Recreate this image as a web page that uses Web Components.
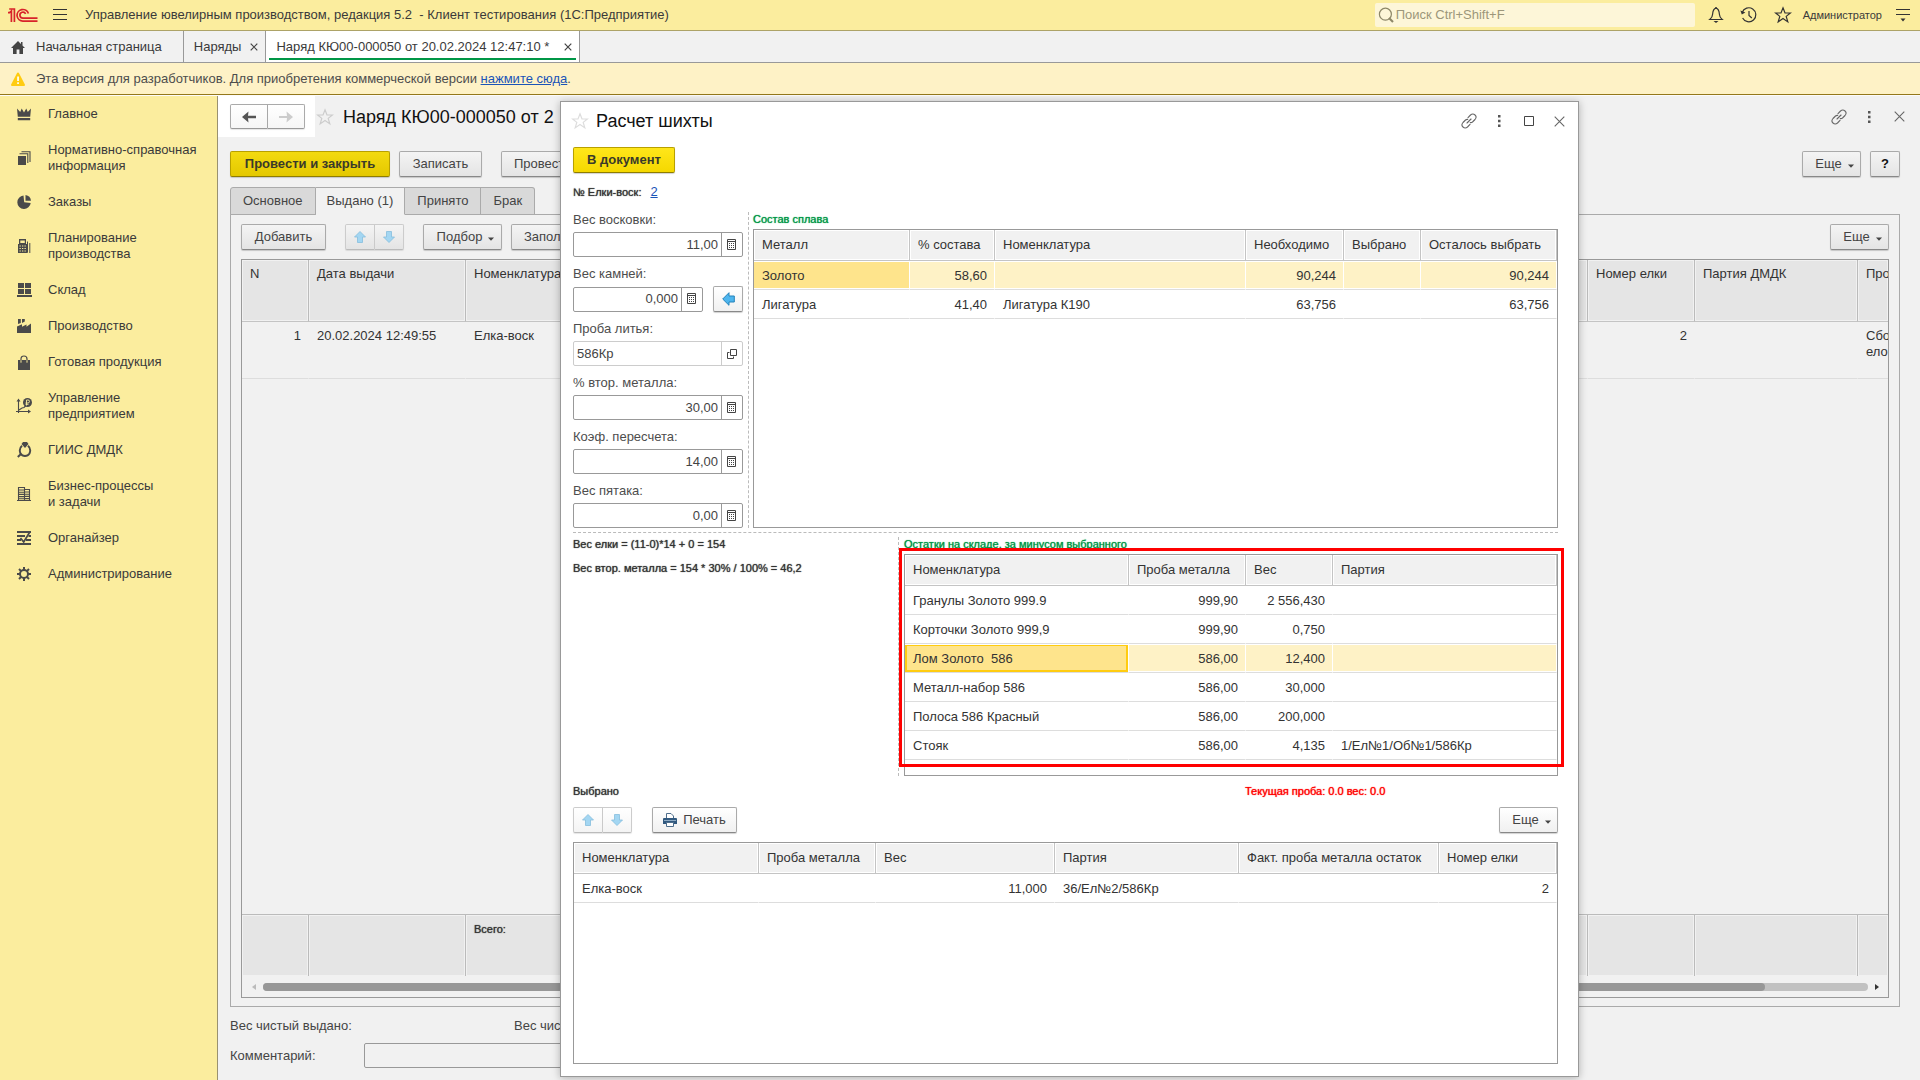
<!DOCTYPE html>
<html lang="ru">
<head>
<meta charset="utf-8">
<title>Управление ювелирным производством</title>
<style>
html, body { margin: 0; height: 100%; }
body { font: 13px/16px "Liberation Sans", Arial, sans-serif; color: #3a3a3a; background: #f1f1f1; overflow: hidden; }
</style>
</head>
<body>
<erp-app></erp-app>
<script>
const ICONS = {
  logo: ['0 0 30 14', '<g fill="none" stroke="#d8232a" stroke-width="1.7"><path d="M0 4.6H1.6L3.4 3V14M1.2 1H6.4V14"/><path d="M20.4 5.6A5.8 5.8 0 1 0 15 13.1H29.5"/><path d="M17.6 5.8A3 3 0 1 0 15 10.1H29.5"/></g>'],
  burger: ['0 0 14 12', '<path d="M0 .5h14M0 5.5h14M0 10.5h14" stroke="#333"/>'],
  search: ['0 0 16 16', '<circle cx="7.4" cy="7.2" r="6" fill="none" stroke="#8d8768" stroke-width="1.2"/><path d="M11 11l4 4" stroke="#8d8768" stroke-width="2.2"/>'],
  bell: ['0 0 16 18', '<path d="M8 2.2C5 3 4.8 5.5 4.6 8.2 4.5 10.8 3.6 12 1.8 13.5H14.2C12.4 12 11.5 10.8 11.4 8.2 11.2 5.5 11 3 8 2.2Z" fill="none" stroke="#333" stroke-width="1.2"/><path d="M7.3 1h1.400v1.500H7.300zM5.500 15h5L8 17z" fill="#333"/>'],
  history: ['0 0 18 18', '<path d="M2.200 6.500A7 7 0 1 1 2.600 12" fill="none" stroke="#333" stroke-width="1.200"/><path d="M.4 4.500l1.400 4 3.600-2z" fill="#333"/><path d="M9 5v4.500l2.800 2.500" fill="none" stroke="#333" stroke-width="1.200"/>'],
  star: ['0 0 18 18', '<path d="M9 1.800l2 5.200h5.400l-4.200 3.400 1.600 5.500L9 12.600l-4.800 3.300 1.600-5.500L1.600 7H7z" fill="none" stroke="currentColor" stroke-width="1.200"/>'],
  usermenu: ['0 0 14 14', '<path d="M0 1.500h14M0 6.500h14" stroke="#333"/><path d="M4.500 10.500h5L7 13.500z" fill="#333"/>'],
  home: ['0 0 14 14', '<path d="M7 1L0 8h2v6h3.600V9.500h2.800V14H12V8h2L11.500 5.500V2H10v2z" fill="#444"/>'],
  close: ['0 0 11 11', '<path d="M.7.7l9.600 9.600M10.300.7L.7 10.300" stroke="currentColor" stroke-width="1.100"/>'],
  closeTab: ['0 0 8 8', '<path d="M.7.7l6.600 6.600M7.300.7L.7 7.300" stroke="#444" stroke-width="1.200"/>'],
  warn: ['0 0 14 14', '<path d="M7 .5Q7.800.5 8.200 1.500L14 12.800Q14 14 13 14H1Q0 14 0 12.800L5.800 1.500Q6.200.5 7 .5Z" fill="#fc1"/><path d="M6.200 4.500h1.700V9H6.200zM6.200 10.300h1.700V12H6.200z" fill="#fff"/>'],
  crown: ['0 0 14 14', '<path d="M0 1.500L3.200 5 4.700 1.500 7 5.500 9.300 1.500 10.800 5 14 1.500 13.200 9.800H.8zM.8 11h12.400v2.200H.8z" fill="#4a4a4a"/>'],
  books: ['0 0 14 14', '<path d="M1 5h8v9H1z" fill="#4a4a4a"/><path d="M2.500 2.800H10.800V12M4.500.8H13V11" fill="none" stroke="#4a4a4a" stroke-width="1.100"/>'],
  pie: ['0 0 14 14', '<path d="M6.500.6A6.700 6.700 0 1 0 13.700 8L7.200 7.200z" fill="#4a4a4a"/><path d="M8.500 0Q13.500.8 14 5.800H8.500z" fill="#4a4a4a"/>'],
  calc: ['0 0 14 14', '<path d="M2 0h7v5H2zM1 5h9.500v9H1z" fill="#4a4a4a"/><path d="M3.300 1.500h4.500v2.500H3.300z" fill="#fbed9e"/><path d="M2.500 7h7M2.500 9.500h7M2.500 12h7" stroke="#fbed9e" stroke-width="1.200" stroke-dasharray="1.300 1.200"/><path d="M10.500 2.500v11M12.800 4v10" stroke="#4a4a4a"/>'],
  store: ['0 0 15 14', '<path d="M1 0h6v5H1zM8 0h6v5H8zM1 6h6v5H1zM8 6h6v5H8zM0 12h15v2H0z" fill="#4a4a4a"/>'],
  factory: ['0 0 14 14', '<path d="M1 0h2.800v4L1 5zM5 0h2.800v2.500L5 4zM0 7.500l5-2.300v2.600l4.500-2.300v2.300L14 4.500V14H0z" fill="#4a4a4a"/>'],
  bag: ['0 0 14 15', '<path d="M1 5h12v10H1z" fill="#4a4a4a"/><path d="M4 8V4Q4 1 7 1t3 3v4" fill="none" stroke="#4a4a4a" stroke-width="1.200"/><path d="M4 5.200v2.500M10 5.200v2.500" stroke="#fbed9e"/>'],
  chart: ['0 0 16 16', '<path d="M2.500 15V2M0 13.500h13M3 12l3-2 2-.5 2-2" fill="none" stroke="#4a4a4a" stroke-width="1.100"/><path d="M.5 3.500L2.500.5l2 3zM12 11.500l3 2-3 2z" fill="#4a4a4a"/><circle cx="11.500" cy="4.500" r="4.500" fill="#4a4a4a"/><path d="M10.500 7.500V2h1.500q1.500 0 1.500 1.400T12 5H9.500M9.500 6.300h3" fill="none" stroke="#fbed9e" stroke-width=".9"/>'],
  gem: ['0 0 15 16', '<path d="M4.500 2L6 0h4l1.500 2L8 6z" fill="#4a4a4a"/><path d="M5 3.800Q1.500 7 3.500 11.500Q5 14 8 14t4.500-2.500Q14.500 7 11 3.800" fill="none" stroke="#4a4a4a" stroke-width="1.900"/><path d="M4.500 11.500L.8 15" stroke="#4a4a4a" stroke-width="2"/>'],
  building: ['0 0 14 14', '<path d="M1.500 14V.5h6V14M7.500 2.500h5V14M0 13.500h14M2 3h5M2 5.200h5M2 7.400h5M2 9.600h5M2 11.800h5M8 5h4.500M8 7.200h4.500M8 9.400h4.500M8 11.600h4.500" fill="none" stroke="#4a4a4a" stroke-width="1.100"/>'],
  organizer: ['0 0 14 14', '<path d="M0 1h14M0 5h8M11.500 5H14M0 9h4M9 9h5M0 13h14" stroke="#4a4a4a" stroke-width="1.900"/><path d="M3.500 7l3.200 4L12.500 1.500" fill="none" stroke="#4a4a4a" stroke-width="1.700"/>'],
  gear: ['0 0 14 14', '<circle cx="7" cy="7" r="4" fill="none" stroke="#4a4a4a" stroke-width="2"/><path d="M7 0v3M7 11v3M0 7h3M11 7h3M2 2l2.100 2.100M9.900 9.900L12 12M12 2L9.900 4.100M4.100 9.900L2 12" stroke="#4a4a4a" stroke-width="2"/>'],
  back: ['0 0 14 12', '<path d="M6.500.5L6 4.800H14v2.400H6l.5 4.300L0 6z" fill="#555"/>'],
  forward: ['0 0 14 12', '<path d="M7.500 .5L8 5H0v2h8l-.5 4.500L14 6z" fill="#ccc"/>'],
  link: ['0 0 16 16', '<g fill="none" stroke="currentColor" stroke-width="1.100" stroke-linecap="round"><path d="M7 4.600L9.500 2Q11.800 0 14 2T14 6.500L11.500 9Q10.500 9.800 9.300 9.600"/><path d="M9 11.400L6.500 14Q4.200 16 2 14T2 9.500L4.500 7Q5.500 6.200 6.700 6.400"/><path d="M6 10l4-4"/></g>'],
  dots: ['0 0 4 12', '<path d="M1 0h2.500v2.500H1zM1 4.700h2.500v2.500H1zM1 9.400h2.500v2.500H1z" fill="#555"/>'],
  square: ['0 0 10 10', '<path d="M.5.5h9v9h-9z" fill="none" stroke="#444"/>'],
  up: ['0 0 12 12', '<path d="M6 .5L11.500 6H8.500v5.500h-5V6H.5z" fill="#a3d6f2" stroke="#85bedd" stroke-width=".8"/>'],
  down: ['0 0 12 12', '<path d="M6 11.500L11.500 6H8.500V.5h-5V6H.5z" fill="#a3d6f2" stroke="#85bedd" stroke-width=".8"/>'],
  left: ['0 0 13 14', '<path d="M.7 7L7 .7V4h5.300v6H7v3.300z" fill="#4db5ee" stroke="#2382ba"/>'],
  caret: ['0 0 6 4', '<path d="M0 .5h6L3 3.700z" fill="#444"/>'],
  pad: ['0 0 10 12', '<path d="M.5.5h8v10h-8zM.5 2.500h8" fill="none" stroke="#444"/><path d="M2 4.500h6M2 6.500h6M2 8.500h6" stroke="#444" stroke-dasharray="1 1"/>'],
  open: ['0 0 10 10', '<path d="M3.500.5h6v6h-6zM2.500 3.500h-2v6h6v-2" fill="none" stroke="#444"/>'],
  printer: ['0 0 14 14', '<path d="M3.500 7V.5H8L10.500 3V7" fill="#fff" stroke="#4f6e8c"/><path d="M1 5h12q1 0 1 1v5H0V6q0-1 1-1z" fill="#31597f"/><path d="M1 7.500h12" stroke="#8eabc4"/><path d="M3.500 9.500h7v4h-7z" fill="#fff" stroke="#4f6e8c"/>'],
  scrollLeft: ['0 0 4 6', '<path d="M4 0v6L0 3z" fill="#bbb"/>'],
  scrollRight: ['0 0 4 6', '<path d="M0 0v6L4 3z" fill="#333"/>']
};

const GRIDS = {
  issued: {
    cols: [{t: 'N', w: 67, r: 1}, {t: 'Дата выдачи', w: 157}, {t: 'Номенклатура'}, {t: 'Номер елки', w: 107, r: 1}, {t: 'Партия ДМДК', w: 163}, {t: 'Про', w: 30, cut: 1}],
    rows: [['1', '20.02.2024 12:49:55', 'Елка-воск', '2', '', 'Сбо<br>ело']],
    foot: ['', '', 'Всего:', '', '', '']
  },
  alloy: {
    cols: [{t: 'Металл', w: 156}, {t: '% состава', w: 85, r: 1}, {t: 'Номенклатура'}, {t: 'Необходимо', w: 98, r: 1}, {t: 'Выбрано', w: 77, r: 1}, {t: 'Осталось выбрать', w: 136, r: 1}],
    rows: [['Золото', '58,60', '', '90,244', '', '90,244'], ['Лигатура', '41,40', 'Лигатура К190', '63,756', '', '63,756']],
    sel: 0
  },
  stock: {
    cols: [{t: 'Номенклатура', w: 224}, {t: 'Проба металла', w: 117, r: 1}, {t: 'Вес', w: 87, r: 1}, {t: 'Партия'}],
    rows: [['Гранулы Золото 999.9', '999,90', '2 556,430', ''], ['Корточки Золото 999,9', '999,90', '0,750', ''], ['Лом Золото&nbsp; 586', '586,00', '12,400', ''],
      ['Металл-набор 586', '586,00', '30,000', ''], ['Полоса 586 Красный', '586,00', '200,000', ''], ['Стояк', '586,00', '4,135', '1/Ел№1/Об№1/586Кр']],
    sel: 2, focus: true
  },
  chosen: {
    cols: [{t: 'Номенклатура', w: 185}, {t: 'Проба металла', w: 117, r: 1}, {t: 'Вес', w: 179, r: 1}, {t: 'Партия'}, {t: 'Факт. проба металла остаток', w: 200, r: 1}, {t: 'Номер елки', w: 118, r: 1}],
    rows: [['Елка-воск', '', '11,000', '36/Ел№2/586Кр', '', '2']]
  }
};

function define(name, css, html) {
  customElements.define(name, class extends HTMLElement {
    connectedCallback() {
      if (this.shadowRoot) return;
      const body = typeof html === 'function' ? html(this) : html;
      this.attachShadow({mode: 'open'}).innerHTML =
        `<style>:host{display:block}*{box-sizing:border-box}button,input{font:inherit;color:inherit}${css}</style>${body}`;
    }
  });
}

define('ui-icon', ':host{display:inline-flex;flex:none}svg{display:block}', el => {
  const [box, art] = ICONS[el.getAttribute('name')];
  const [, , w, h] = box.split(' ');
  return `<svg width="${w}" height="${h}" viewBox="${box}" aria-hidden="true">${art}</svg>`;
});

define('ui-button', `
  :host{display:block;flex:none}
  button{display:flex;align-items:center;justify-content:center;gap:6px;width:100%;height:26px;padding:0 12px;white-space:nowrap;
    border:1px solid #aaa;border-bottom-color:#888;border-radius:2px;color:#444;
    background:linear-gradient(var(--btn-top,#fff),var(--btn-bottom,#f0f0f0));box-shadow:0 1px 1px rgba(0,0,0,.18)}
  :host([primary]) button{font-weight:bold;color:#3a3a2a;border-color:#b8a000;border-bottom-color:#8f7d00;background:linear-gradient(var(--pri-top,#ffe61a),var(--pri-bottom,#f5d800))}
  :host([menu]) button{padding:0 6px 0 12px}
  :host([tight]) button{padding:0 7px}
  :host([square]) button{padding:0}
  :host([help]) button{font-weight:bold;color:#111}
  ui-icon[name=caret]{margin-top:3px}
`, el => {
  const label = el.getAttribute('label');
  return `<button type="button"${label ? ` aria-label="${label}"` : ''}><slot></slot>${el.hasAttribute('menu') ? '<ui-icon name="caret"></ui-icon>' : ''}</button>`;
});

define('button-pair', `
  :host{display:flex;flex:none;height:26px}
  button{display:flex;align-items:center;justify-content:center;flex:1;padding:0;border:1px solid var(--pair-border,#ccc);border-bottom-color:var(--pair-bottom,#bbb);background:linear-gradient(var(--btn-top,#fff),var(--btn-bottom,#f4f4f4));box-shadow:0 1px 1px rgba(0,0,0,.1)}
  button:first-child,style+button{border-radius:2px 0 0 2px}
  button:last-child{border-radius:0 2px 2px 0;border-left:0}
`, el => {
  const [a, b] = el.getAttribute('icons').split(' ');
  const [la, lb] = el.getAttribute('labels').split('|');
  return `<button type="button" aria-label="${la}"><ui-icon name="${a}"></ui-icon></button><button type="button" aria-label="${lb}"><ui-icon name="${b}"></ui-icon></button>`;
});

define('icon-button', 'button{display:flex;justify-content:center;width:100%;padding:0;border:0;background:none;color:inherit}', el =>
  `<button type="button" aria-label="${el.getAttribute('label')}"><ui-icon name="${el.getAttribute('icon')}"></ui-icon></button>`);

define('title-bar', `
  :host{display:flex;align-items:center;height:31px;padding:0 10px 0 8px;background:#fbed9e;border-bottom:1px solid #ada367}
  .burger{margin:0 18px 0 15px}
  .title{flex:1;white-space:pre}
  .search{display:flex;align-items:center;gap:2px;width:320px;height:24px;padding-left:3px;margin-right:13px;background:#fdf6d8;border-radius:2px}
  input{flex:1;min-width:0;border:0;padding:0;background:none;outline:0}
  input::placeholder{color:#9c967a;opacity:1}
  .tools{display:flex;align-items:center;gap:16px;margin-right:11px;color:#333}
  .user{font-size:11px;margin-right:14px}
`, `<ui-icon name="logo"></ui-icon><icon-button class="burger" icon="burger" label="Меню функций"></icon-button>
  <span class="title">Управление ювелирным производством, редакция 5.2  - Клиент тестирования (1С:Предприятие)</span>
  <div class="search"><ui-icon name="search"></ui-icon><input type="text" placeholder="Поиск Ctrl+Shift+F" aria-label="Поиск"></div>
  <div class="tools"><icon-button icon="bell" label="Уведомления"></icon-button><icon-button icon="history" label="История"></icon-button><icon-button icon="star" label="Избранное"></icon-button></div>
  <span class="user">Администратор</span><icon-button icon="usermenu" label="Настройка"></icon-button>`);

define('window-tab', `
  :host{display:flex;align-items:center;justify-content:space-between;gap:9px;padding:0 7px 0 10px;border-right:1px solid #999;position:relative}
  :host([home]){gap:11px;padding:0 21px 0 11px}
  :host([active]){background:#fff;min-width:314px}
  :host([active])::after{content:"";position:absolute;left:3px;right:3px;bottom:2px;height:2px;background:#009646}
`, el => el.hasAttribute('home') ? '<ui-icon name="home"></ui-icon><slot></slot>' : '<slot></slot><icon-button icon="closeTab" label="Закрыть"></icon-button>');

define('window-tabs', ':host{display:flex;height:32px;background:#f1f1f1;border-bottom:1px solid #999}', '<slot></slot>');

define('notice-bar', `
  :host{display:flex;align-items:center;gap:11px;height:32px;padding-left:11px;background:#fef2c6;border-bottom:1px solid #94781b;color:#4d4d4d}
  a{color:#1a54b8}
`, '<ui-icon name="warn"></ui-icon><span>Эта версия для разработчиков. Для приобретения коммерческой версии <a href="#">нажмите сюда</a>.</span>');

define('nav-item', `
  a{display:grid;grid-template-columns:14px 1fr;column-gap:17px;align-items:center;justify-items:center;padding:10px 8px 10px 17px;color:#3a3a3a;text-decoration:none}
  span{justify-self:start}
`, el => `<a href="#"><ui-icon name="${el.getAttribute('icon')}"></ui-icon><span><slot></slot></span></a>`);

define('side-nav', ':host{background:#fbed9e;border-right:1px solid #999170;width:218px;flex:none;box-sizing:border-box}', `<nav>
  <nav-item icon="crown">Главное</nav-item>
  <nav-item icon="books">Нормативно-справочная<br>информация</nav-item>
  <nav-item icon="pie">Заказы</nav-item>
  <nav-item icon="calc">Планирование<br>производства</nav-item>
  <nav-item icon="store">Склад</nav-item>
  <nav-item icon="factory">Производство</nav-item>
  <nav-item icon="bag">Готовая продукция</nav-item>
  <nav-item icon="chart">Управление<br>предприятием</nav-item>
  <nav-item icon="gem">ГИИС ДМДК</nav-item>
  <nav-item icon="building">Бизнес-процессы<br>и задачи</nav-item>
  <nav-item icon="organizer">Органайзер</nav-item>
  <nav-item icon="gear">Администрирование</nav-item></nav>`);

define('data-grid', `
  :host{display:flex;flex-direction:column;border:1px solid #999;background:var(--grid-bg,#fff);overflow:hidden;min-height:0}
  table{width:100%;table-layout:fixed;border-collapse:separate;border-spacing:0;flex:none}
  .fill{flex:1}
  th,td{font-weight:normal;text-align:left;padding:0 7px 0 8px;white-space:nowrap;overflow:hidden;color:#333}
  th{height:31px;padding:0 6px 0 8px;background:var(--head-bg,#f1f1f1);border-right:1px solid #c4c4c4;border-bottom:1px solid #c4c4c4;box-shadow:inset 0 0 0 1px var(--grid-bg,#fff)}
  td{height:29px;padding-top:2px;border-bottom:1px solid #ddd;border-right:1px solid transparent}
  .r{text-align:right}
  .sel td{background:#fef2c6;border-right-color:#fff;box-shadow:inset 0 1px #fff,inset 0 -1px #fff}
  .sel td:first-child{background:#fee48c}
  .focus td:first-child{box-shadow:inset 0 1px #fff,inset 0 0 0 2px #fc1}
  :host([tall]) th{height:62px;vertical-align:top;padding-top:6px}
  :host([tall]) td{height:57px;vertical-align:top;padding-top:6px}
  :host([tall]) th{border-right-color:#bbb}
  :host([tall]) tr>.cut{padding-right:0;border-right:0}
  .foot{border-top:1px solid #bbb}
  .foot tr>td:nth-child(n){height:61px;background:var(--head-bg);border-right-color:#bbb;border-bottom:0;font-size:11px;text-shadow:0 0 1px currentColor;box-shadow:inset 0 0 0 1px var(--grid-bg)}
  .scroll{display:flex;align-items:center;gap:7px;height:21px;padding:0 9px 0 10px}
  .track{flex:1;height:8px;border-radius:4px;background:#c1c1c1}
  .thumb{width:93.6%;height:8px;border-radius:4px;background:#979797}
`, el => {
  const g = GRIDS[el.getAttribute('source')];
  const cls = c => (c.r ? 'r ' : '') + (c.cut ? 'cut' : '');
  const colgroup = `<colgroup>${g.cols.map(c => `<col${c.w ? ` style="width:${c.w}px"` : ''}>`).join('')}</colgroup>`;
  const line = r => r.map((v, i) => `<td class="${cls(g.cols[i])}">${v}</td>`).join('');
  return `<table>${colgroup}<thead><tr>${g.cols.map(c => `<th scope="col" class="${c.cut ? 'cut' : ''}">${c.t}</th>`).join('')}</tr></thead>
    <tbody>${g.rows.map((r, i) => `<tr class="${g.sel === i ? 'sel' + (g.focus ? ' focus' : '') : ''}">${line(r)}</tr>`).join('')}</tbody></table>
    <div class="fill"></div>${g.foot ? `<table class="foot">${colgroup}<tbody><tr>${line(g.foot)}</tr></tbody></table>
    <div class="scroll"><ui-icon name="scrollLeft"></ui-icon><div class="track"><div class="thumb"></div></div><ui-icon name="scrollRight"></ui-icon></div>` : ''}`;
});

define('form-field', `
  label{display:block;height:20px;line-height:16px;color:#4d4d4d;white-space:nowrap}
  .row{display:flex;align-items:center;gap:10px}
  .box{display:flex;flex:1;min-width:0;height:25px;border:1px solid #999;border-radius:2px;background:#fff}
  input{flex:1;min-width:0;width:0;border:0;padding:0 3px;background:none;outline:0;text-align:right;color:#444}
  .box button{display:flex;align-items:center;justify-content:center;width:21px;padding:0;border:0;border-left:1px solid #999;background:none}
  :host([ref]) .box,:host([ref]) .box button{border-color:#ccc}
  :host([ref]) input{text-align:left}
  ui-button{width:30px}
`, el => `<label for="v">${el.getAttribute('label')}</label><div class="row"><div class="box"><input id="v" type="text" value="${el.getAttribute('value')}">
  <button type="button" aria-label="Выбрать"><ui-icon name="${el.hasAttribute('ref') ? 'open' : 'pad'}"></ui-icon></button></div>
  ${el.hasAttribute('fill') ? '<ui-button square label="Заполнить"><ui-icon name="left"></ui-icon></ui-button>' : ''}</div>`);

define('page-tabs', `
  :host{display:flex;height:28px;margin-bottom:-1px;position:relative}
  button{height:28px;padding:0 12px;border:1px solid #aaa;border-left:0;background:#d9d9d9;color:#444}
  style+button{border-left:1px solid #aaa;border-top-left-radius:3px}
  button:last-child{border-top-right-radius:3px}
  button.on{padding:0 11px;background:#f1f1f1;border-bottom-color:#f1f1f1}
`, '<button type="button">Основное</button><button type="button" class="on">Выдано (1)</button><button type="button">Принято</button><button type="button">Брак</button>');

define('order-page', `
  :host{display:flex;flex-direction:column;flex:1;min-width:0;box-sizing:border-box;padding:0 20px 12px 12px;
    --btn-top:#f4f4f4;--btn-bottom:#e4e4e4;--pri-top:#f3da10;--pri-bottom:#e4c800;--grid-bg:#f1f1f1;--head-bg:#e5e5e5}
  .head{display:flex;align-items:center;height:41px;margin-left:-12px}
  .nav{background:#fff;padding:8px 10px 7px 12px;align-self:stretch}
  .nav button-pair{width:75px;height:25px;--btn-top:#fff;--btn-bottom:#f6f6f6;--pair-border:#aaa;--pair-bottom:#999}
  h1{flex:1;min-width:0;font:18px/22px "Liberation Sans",Arial,sans-serif;color:#111;margin:0;white-space:nowrap;overflow:hidden}
  .head icon-button{color:#666}
  .head .star{margin:0 9px 0 1px;color:#ccc}
  .win{display:flex;align-items:center;gap:14px;margin-right:-7px}
  .win icon-button{width:16px}
  .bar{display:flex;align-items:center;height:26px}
  .commands{margin:14px 0 10px}
  .gap{flex:1}
  .panel{display:flex;flex-direction:column;flex:1;min-height:0;border:1px solid #aaa;padding:9px 10px 8px}
  data-grid{flex:1;margin-top:9px}
  .totals{display:flex;height:16px;margin:11px 0 9px;white-space:nowrap;color:#444}
  .totals span:first-child{width:284px}
  .comment{display:flex;align-items:center;color:#444}
  .comment label{width:134px}
  .comment input{width:600px;height:25px;border:1px solid #999;border-radius:2px;background:#f1f1f1;padding:0 4px}
`, `<div class="head"><div class="nav"><button-pair icons="back forward" labels="Назад|Вперед"></button-pair></div>
    <icon-button class="star" icon="star" label="В избранное"></icon-button><h1>Наряд КЮ00-000050 от 2</h1>
    <div class="win"><icon-button icon="link" label="Ссылка"></icon-button><icon-button icon="dots" label="Меню"></icon-button><icon-button icon="close" label="Закрыть"></icon-button></div></div>
  <div class="bar commands"><ui-button primary style="width:160px">Провести и закрыть</ui-button><ui-button style="width:83px;margin-left:9px">Записать</ui-button>
    <ui-button style="margin-left:19px">Провести</ui-button><span class="gap"></span><ui-button menu style="width:59px">Еще</ui-button>
    <ui-button square help style="width:30px;margin-left:9px">?</ui-button></div>
  <page-tabs></page-tabs>
  <section class="panel"><div class="bar"><ui-button style="width:85px">Добавить</ui-button><button-pair style="width:59px;margin:0 19px" icons="up down" labels="Вверх|Вниз"></button-pair>
    <ui-button menu style="width:79px">Подбор</ui-button><ui-button style="margin-left:9px">Заполнить</ui-button><span class="gap"></span><ui-button menu style="width:59px">Еще</ui-button></div>
    <data-grid tall source="issued"></data-grid></section>
  <div class="totals"><span>Вес чистый выдано:</span><span>Вес чистый принято:</span></div>
  <div class="comment"><label for="c">Комментарий:</label><input id="c" type="text"></div>`);

define('charge-dialog', `
  :host{display:flex;flex-direction:column;box-sizing:border-box;background:#fff;border:1px solid #999;box-shadow:0 1px 8px rgba(0,0,0,.28);padding:7px 20px 12px 12px}
  .head{display:flex;align-items:center;height:24px}
  .head icon-button{color:#666}
  .head .star{color:#ddd;margin:0 7px 0 -2px}
  h2{flex:1;margin:0;font:18px/22px "Liberation Sans",Arial,sans-serif;color:#111}
  .win{display:flex;align-items:center;gap:14px;margin-right:-9px}
  .win icon-button{width:16px}
  .main{align-self:flex-start;width:102px;margin-top:14px}
  .small{font-size:11px;line-height:14px;color:#333;text-shadow:0 0 1px currentColor}
  .number{display:flex;align-items:center;gap:9px;height:16px;margin-top:11px}
  a{color:#1a54b8}
  .top{display:flex;margin-top:12px;height:316px}
  .fields{display:flex;flex-direction:column;gap:9px;width:170px}
  .group{display:flex;flex-direction:column;flex:1;min-width:0;position:relative}
  .group .small{color:#009646}
  .top .group{border-left:1px dashed #bbb;margin-left:5px;padding-left:4px}
  .top data-grid{flex:1;margin-top:3px}
  .middle{display:flex;margin-top:4px;padding-top:4px;height:244px;border-top:1px dashed #bbb;box-sizing:border-box}
  .notes{width:325px}
  .notes p{margin:0 0 10px}
  .middle .group{border-left:1px dashed #bbb;padding-left:5px}
  .middle data-grid{flex:1;margin-top:3px}
  .mark{position:absolute;left:0;right:-6px;top:11px;bottom:9px;border:3px solid #f00;pointer-events:none}
  .status{display:grid;grid-template-columns:672px 1fr;margin-top:8px}
  .status .cur{color:#f00}
  .bar{display:flex;align-items:center;justify-content:space-between;height:26px;margin:9px 0}
  .bar div{display:flex;gap:20px}
  button-pair{width:59px}
  .chosen{flex:1}
`, `<div class="head"><icon-button class="star" icon="star" label="В избранное"></icon-button><h2>Расчет шихты</h2>
    <div class="win"><icon-button icon="link" label="Ссылка"></icon-button><icon-button icon="dots" label="Меню"></icon-button><icon-button icon="square" label="Развернуть"></icon-button><icon-button icon="close" label="Закрыть"></icon-button></div></div>
  <ui-button class="main" primary>В документ</ui-button>
  <div class="number"><span class="small">№ Елки-воск:</span><a href="#">2</a></div>
  <div class="top"><div class="fields">
      <form-field label="Вес восковки:" value="11,00"></form-field>
      <form-field label="Вес камней:" value="0,000" fill></form-field>
      <form-field label="Проба литья:" value="586Кр" ref></form-field>
      <form-field label="% втор. металла:" value="30,00"></form-field>
      <form-field label="Коэф. пересчета:" value="14,00"></form-field>
      <form-field label="Вес пятака:" value="0,00"></form-field></div>
    <div class="group"><span class="small">Состав сплава</span><data-grid source="alloy"></data-grid></div></div>
  <div class="middle"><div class="notes"><p class="small">Вес елки = (11-0)*14 + 0 = 154</p><p class="small">Вес втор. металла = 154 * 30% / 100% = 46,2</p></div>
    <div class="group"><span class="small">Остатки на складе, за минусом выбранного</span><data-grid source="stock"></data-grid><div class="mark"></div></div></div>
  <div class="status"><span class="small">Выбрано</span><span class="small cur">Текущая проба: 0.0 вес: 0.0</span></div>
  <div class="bar"><div><button-pair icons="up down" labels="Вверх|Вниз"></button-pair><ui-button tight style="width:85px"><ui-icon name="printer"></ui-icon>Печать</ui-button></div><ui-button menu style="width:59px">Еще</ui-button></div>
  <data-grid class="chosen" source="chosen"></data-grid>`);

define('erp-app', `
  :host{display:flex;flex-direction:column;height:100vh;position:relative}
  .work{display:flex;flex:1;min-height:0;border-top:1px solid #fbfbfb}
  charge-dialog{position:absolute;left:560px;right:341px;top:101px;bottom:3px}
`, `<title-bar></title-bar>
  <window-tabs><window-tab home>Начальная страница</window-tab><window-tab>Наряды</window-tab><window-tab active>Наряд КЮ00-000050 от 20.02.2024 12:47:10 *</window-tab></window-tabs>
  <notice-bar></notice-bar>
  <div class="work"><side-nav></side-nav><order-page></order-page></div>
  <charge-dialog></charge-dialog>`);
</script>
</body>
</html>
